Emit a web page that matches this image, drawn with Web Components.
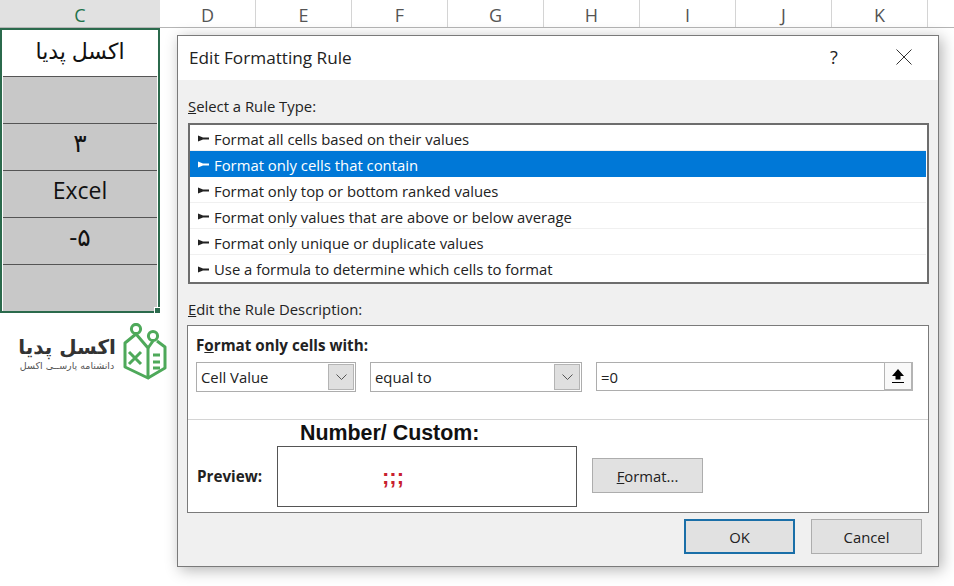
<!DOCTYPE html>
<html>
<head>
<meta charset="utf-8">
<title>Edit Formatting Rule</title>
<style>
html, body { margin: 0; height: 100%; background: #fff; overflow: hidden; }
body { position: relative; width: 954px; height: 586px; font-family: "Open Sans", "DejaVu Sans", sans-serif; }
</style>
</head>
<body>
<sheet-grid>
  <sheet-cell first>اکسل پدیا</sheet-cell>
  <sheet-cell shaded></sheet-cell>
  <sheet-cell shaded big>۳</sheet-cell>
  <sheet-cell shaded>Excel</sheet-cell>
  <sheet-cell shaded big>-۵</sheet-cell>
  <sheet-cell shaded last></sheet-cell>
</sheet-grid>
<format-dialog>
  <span slot="title">Edit Formatting Rule</span>
  <rule-list>
    <rule-item>Format all cells based on their values</rule-item>
    <rule-item selected>Format only cells that contain</rule-item>
    <rule-item>Format only top or bottom ranked values</rule-item>
    <rule-item>Format only values that are above or below average</rule-item>
    <rule-item>Format only unique or duplicate values</rule-item>
    <rule-item last>Use a formula to determine which cells to format</rule-item>
  </rule-list>
</format-dialog>

<script>
class SheetCell extends HTMLElement {
  constructor() {
    super();
    this.attachShadow({mode: 'open'}).innerHTML = `
<style>
:host {
  display: flex;
  align-items: center;
  justify-content: center;
  box-sizing: border-box;
  height: 47px;
  border-bottom: 1px solid #555;
  font: 23px "Open Sans", "DejaVu Sans", sans-serif;
  color: #111;
  padding-bottom: 9px;
}
:host([first]) { height: 46px; background: #fff; font-size: 22px; padding-bottom: 7px; }
:host([shaded]) { background: #c8c8c8; }
:host([big]) { font-size: 25px; padding-bottom: 10px; }
:host([last]) { border-bottom: 0; height: 46px; }
</style>
<slot></slot>`;
  }
}

class SheetGrid extends HTMLElement {
  constructor() {
    super();
    const cols = ['D', 'E', 'F', 'G', 'H', 'I', 'J', 'K'];
    this.attachShadow({mode: 'open'}).innerHTML = `
<style>
:host { display: block; }
.head { display: flex; height: 28px; box-sizing: border-box; border-bottom: 1px solid #b5b5b5; font: 18px "Open Sans", sans-serif; color: #555; }
.head div { display: flex; align-items: center; justify-content: center; width: 96px; box-sizing: border-box; padding-top: 3px; border-right: 1px solid #d4d4d4; }
.head .on { width: 160px; background: #e1e1e1; color: #21724a; border-right: 0; }
.sel { width: 160px; height: 285px; box-sizing: border-box; padding: 1px; background: #fff; border: 2px solid #2b6a4c; position: relative; }
.handle { position: absolute; right: -3px; bottom: -3px; width: 5px; height: 5px; background: #2b6a4c; border: 1px solid #fff; }
</style>
<div class="head"><div class="on">C</div>${cols.map(c => `<div>${c}</div>`).join('')}</div>
<div class="sel"><slot></slot><div class="handle"></div></div>
<excel-logo></excel-logo>`;
  }
}

class ExcelLogo extends HTMLElement {
  constructor() {
    super();
    this.attachShadow({mode: 'open'}).innerHTML = `
<style>
:host { display: flex; align-items: center; gap: 8px; width: 150px; margin: 10px 0 0 19px; font-family: "DejaVu Sans", sans-serif; color: #333; }
.name { font-size: 20px; font-weight: bold; line-height: 26px; white-space: nowrap; }
.tag { font-size: 9.5px; line-height: 12px; color: #555; white-space: nowrap; }
.words { display: flex; flex-direction: column; align-items: center; width: 96px; }
</style>
<div class="words"><div class="name" dir="rtl">اکسل پدیا</div><div class="tag" dir="rtl">دانشنامه پارســی اکسل</div></div>
<svg width="46" height="60" viewBox="0 0 46 60" fill="none" stroke="#4ea95a" stroke-width="3" stroke-linejoin="round">
  <circle cx="13" cy="6" r="4.6"/><circle cx="30" cy="13" r="4.6"/>
  <path d="M13 11 L2 20 V44 L25 55 V25 L13 11"/>
  <path d="M25 55 L42 45 V24 L34 18 M30 18 L25 25"/>
  <path d="M6 29 L18 41 M18 29 L6 41" stroke-width="3"/>
  <path d="M30 32 H37 M30 39 H37 M30 45 H37" stroke-width="3"/>
</svg>`;
  }
}

class RuleItem extends HTMLElement {
  constructor() {
    super();
    this.attachShadow({mode: 'open'}).innerHTML = `
<style>
:host { display: flex; align-items: center; gap: 5px; height: 26px; box-sizing: border-box; padding: 2px 0 0 8px; border-bottom: 1px solid #f0f0f0; color: #222; }
:host([selected]) { background: #0078d7; color: #fff; border-bottom: 0; padding-top: 1px; }
:host([last]) { border-bottom: 0; }
svg { fill: currentColor; }
</style>
<svg width="11" height="7" viewBox="0 0 11 7"><path d="M0 .5 L5 2.5 H11 V4.5 H5 L0 6.5 Z"/></svg>
<slot></slot>`;
  }
}

class RuleList extends HTMLElement {
  constructor() {
    super();
    this.attachShadow({mode: 'open'}).innerHTML = `
<style>
:host { display: block; box-sizing: border-box; height: 161px; margin: 7px 9px 0 10px; padding: 0 1px 0 0; background: #fff; border: 2px solid #6d6d6d; }
</style>
<slot></slot>`;
  }
}

class DropSelect extends HTMLElement {
  constructor() {
    super();
    this.attachShadow({mode: 'open'}).innerHTML = `
<style>
:host { display: flex; align-items: center; box-sizing: border-box; height: 30px; padding-left: 4px; border: 1px solid #adadad; background: #fff; }
span { flex: 1; }
.btn { display: flex; align-items: center; justify-content: center; width: 26px; height: 26px; margin-right: 1px; box-sizing: border-box; background: #dfdfdf; border: 1px solid #b4b4b4; }
</style>
<span><slot></slot></span>
<div class="btn"><svg width="11" height="6" viewBox="0 0 11 6" fill="none" stroke="#555"><path d="M.5 .5 L5.5 5.5 L10.5 .5"/></svg></div>`;
  }
}

class RefInput extends HTMLElement {
  constructor() {
    super();
    this.attachShadow({mode: 'open'}).innerHTML = `
<style>
:host { display: flex; align-items: center; box-sizing: border-box; height: 29px; padding-left: 4px; border: 1px solid #adadad; background: #fff; }
span { flex: 1; }
.btn { display: flex; align-items: center; justify-content: center; width: 29px; height: 29px; margin-right: -1px; box-sizing: border-box; background: #f9f9f9; border: 2px solid #b4b4b4; border-width: 1px 2px 2px 1px; }
</style>
<span><slot></slot></span>
<div class="btn"><svg width="14" height="15" viewBox="0 0 14 15"><path d="M7 0 L13 7 H9.5 V10.5 H4.5 V7 H1 Z M1 13 H13 V14 H1 Z"/></svg></div>`;
  }
}

class DlgButton extends HTMLElement {
  constructor() {
    super();
    this.attachShadow({mode: 'open'}).innerHTML = `
<style>
:host { display: flex; align-items: center; justify-content: center; box-sizing: border-box; width: 111px; height: 35px; background: #e1e1e1; border: 1px solid #adadad; color: #222; }
:host([primary]) { border: 2px solid #1a6fa8; }
</style>
<slot></slot>`;
  }
}

class FormatDialog extends HTMLElement {
  constructor() {
    super();
    this.attachShadow({mode: 'open'}).innerHTML = `
<style>
:host {
  position: absolute; left: 177px; top: 35px; width: 762px; height: 532px;
  box-sizing: border-box; display: flex; flex-direction: column;
  background: #f0f0f0; border: 1px solid #7a7a7a;
  box-shadow: 3px 3px 14px #0000004d;
  font: 14.85px "Open Sans", sans-serif; color: #222;
}
header { display: flex; align-items: center; height: 44px; box-sizing: border-box; padding: 0 0 2px 11px; background: #fff; font-size: 17.2px; flex: none; }
header .t { flex: 1; }
header .q { width: 20px; font-size: 18px; margin-right: 52px; text-align: center; }
header svg { margin-right: 26px; }
b { font-size: 15.2px; }
.lbl { margin: 16px 0 0 10px; line-height: 20px; }
.lbl2 { margin: 15px 0 0 10px; line-height: 20px; }
.desc { box-sizing: border-box; height: 188px; margin: 6px 9px 0 9px; background: #fff; border: 1px solid #7a7a7a; }
.top { height: 94px; box-sizing: border-box; border-bottom: 1px solid #d4d4d4; padding: 9px 8px 0; }
.top b { display: block; line-height: 20px; }
.row { display: flex; align-items: flex-start; gap: 14px; margin-top: 7px; }
.prev { position: relative; display: flex; padding-left: 9px; }
.num { position: absolute; left: 112px; top: 1px; font: bold 21.4px/24px "Liberation Sans", sans-serif; color: #111; white-space: nowrap; }
.pv { display: flex; align-items: center; gap: 15px; margin-top: 26px; }
.pv b { width: 65px; white-space: nowrap; margin-bottom: 2px; }
.box { display: flex; align-items: center; justify-content: center; box-sizing: border-box; width: 300px; height: 61px; padding-right: 68px; border: 1px solid #555; color: #c8202f; font: bold 22px "Liberation Sans", sans-serif; }
.pv dlg-button { margin-bottom: 2px; }
.foot { display: flex; justify-content: flex-end; gap: 16px; margin: 6px 16px 0 0; }
</style>
<header>
  <span class="t"><slot name="title"></slot></span>
  <span class="q">?</span>
  <svg width="16" height="16" viewBox="0 0 16 16" fill="none" stroke="#333"><path d="M.5 .5 L15.5 15.5 M15.5 .5 L.5 15.5"/></svg>
</header>
<div class="lbl"><u>S</u>elect a Rule Type:</div>
<slot></slot>
<div class="lbl2"><u>E</u>dit the Rule Description:</div>
<div class="desc">
  <div class="top">
    <b>F<u>o</u>rmat only cells with:</b>
    <div class="row">
      <drop-select style="width:160px">Cell Value</drop-select>
      <drop-select style="width:212px">equal to</drop-select>
      <ref-input style="width:317px">=0</ref-input>
    </div>
  </div>
  <div class="prev">
    <div class="num">Number/ Custom:</div>
    <div class="pv">
      <b>Preview:</b>
      <div class="box">;;;</div>
      <dlg-button><span><u>F</u>ormat...</span></dlg-button>
    </div>
  </div>
</div>
<div class="foot">
  <dlg-button primary>OK</dlg-button>
  <dlg-button>Cancel</dlg-button>
</div>`;
  }
}

customElements.define('sheet-cell', SheetCell);
customElements.define('excel-logo', ExcelLogo);
customElements.define('sheet-grid', SheetGrid);
customElements.define('rule-item', RuleItem);
customElements.define('rule-list', RuleList);
customElements.define('drop-select', DropSelect);
customElements.define('ref-input', RefInput);
customElements.define('dlg-button', DlgButton);
customElements.define('format-dialog', FormatDialog);
</script>
</body>
</html>
